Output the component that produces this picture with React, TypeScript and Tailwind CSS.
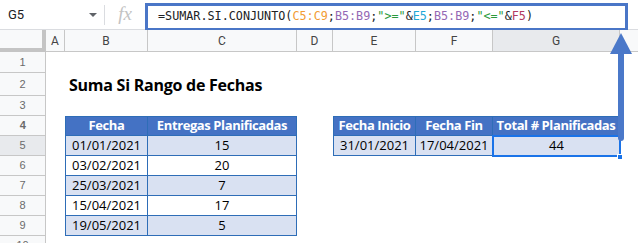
import React from "react";

const cellFont = { fontFamily: '"Open Sans", "Noto Sans", sans-serif' };

function RowHeader({ n, h, sel }: { n: string; h: number; sel?: boolean }) {
  return (
    <div
      className={`flex-none w-[46px] flex items-center justify-center border-r border-b border-[#c7c7c7] text-[11px] text-[#6b6b6b] ${sel ? "bg-[#e8eaed]" : "bg-[#f8f9fa]"}`}
      style={{ height: h, fontFamily: '"Liberation Sans", Arial, sans-serif' }}
    >
      {n}
    </div>
  );
}

const W = { A: 19, B: 83, C: 149, D: 36, E: 83, F: 77, G: 127 };

function Blank({ w }: { w: number }) {
  return <div className="flex-none h-full" style={{ width: w }} />;
}

export default function App() {
  const dataRows = [
    ["01/01/2021", "15", true],
    ["03/02/2021", "20", false],
    ["25/03/2021", "7", true],
    ["15/04/2021", "17", false],
    ["19/05/2021", "5", true],
  ] as const;
  const rowHeights = [20, 20, 20, 20, 20];

  return (
    <div className="relative w-[638px] h-[243px] overflow-hidden bg-white">
      {/* formula bar */}
      <div className="flex h-[30px] items-center border-b border-[#dadce0] bg-white">
        <div className="w-[104px] flex items-center pl-[8px] pr-[7px] h-full">
          <span className="text-[13px] text-[#202124]" style={{ fontFamily: 'Roboto, "Liberation Sans", sans-serif' }}>G5</span>
          <span className="ml-auto w-0 h-0 border-l-[4px] border-r-[4px] border-t-[4px] border-l-transparent border-r-transparent border-t-[#5f6368]" />
        </div>
        <div className="w-px h-[20px] bg-[#dadce0]" />
        <div className="w-[40px] flex items-center justify-center text-[19px] italic text-[#c3c3c3]" style={{ fontFamily: '"Liberation Serif", serif' }}>
          fx
        </div>
        <div
          className="flex-none w-[483px] h-[28px] mt-[5px] border-[3px] border-[#4a76c7] flex items-center pl-[10px] text-[11.75px] text-[#202124]"
          style={{ fontFamily: '"DejaVu Sans Mono", "Liberation Mono", monospace' }}
        >
          <span>=SUMAR.SI.CONJUNTO(</span>
          <span className="text-[#f29c33]">C5:C9</span>
          <span>;</span>
          <span className="text-[#9468b4]">B5:B9</span>
          <span>;</span>
          <span className="text-[#2a9a3c]">"&gt;="</span>
          <span>&amp;</span>
          <span className="text-[#1fa7d6]">E5</span>
          <span>;</span>
          <span className="text-[#9468b4]">B5:B9</span>
          <span>;</span>
          <span className="text-[#2a9a3c]">"&lt;="</span>
          <span>&amp;</span>
          <span className="text-[#b33a62]">F5</span>
          <span>)</span>
        </div>
      </div>

      {/* column header */}
      <div className="flex h-[22px] text-[12px] text-[#444]" style={{ fontFamily: 'Roboto, "Liberation Sans", sans-serif' }}>
        <div className="flex-none w-[46px] h-full bg-[#f8f9fa] border-r-[4px] border-b-[4px] border-[#c4c4c4]" />
        {[
          ["A", W.A],
          ["B", W.B],
          ["C", W.C],
          ["D", W.D],
          ["E", W.E],
          ["F", W.F],
        ].map(([l, w]) => (
          <div key={l as string} className="flex-none h-full flex items-center justify-center bg-[#f8f9fa] border-r border-b border-[#c7c7c7]" style={{ width: w as number }}>
            {l}
          </div>
        ))}
        <div className="flex-none h-full flex items-center justify-center bg-[#e8eaed] border-r border-b border-[#c7c7c7]" style={{ width: W.G }}>
          G
        </div>
        <div className="flex-1 h-full bg-[#f8f9fa] border-b border-[#c7c7c7]" />
      </div>

      {/* row 1 */}
      <div className="flex h-[21px]">
        <RowHeader n="1" h={21} />
      </div>
      {/* row 2 */}
      <div className="flex h-[23px]">
        <RowHeader n="2" h={23} />
        <Blank w={W.A} />
        <div className="flex items-center pl-[4px] text-[16px] font-bold text-black whitespace-nowrap tracking-[-0.25px]" style={cellFont}>
          Suma Si Rango de Fechas
        </div>
      </div>
      {/* row 3 */}
      <div className="flex h-[20px]">
        <RowHeader n="3" h={20} />
      </div>
      {/* row 4 header */}
      <div className="flex h-[20px] text-[13px] font-bold text-white tracking-[-0.4px]" style={cellFont}>
        <RowHeader n="4" h={20} />
        <Blank w={W.A} />
        <div className="flex-none h-full flex items-center justify-center bg-[#4472c4] border border-[#2e6db7]" style={{ width: W.B }}>Fecha</div>
        <div className="flex-none h-full flex items-center justify-center bg-[#4472c4] border-y border-r border-[#2e6db7] whitespace-nowrap" style={{ width: W.C }}>Entregas Planificadas</div>
        <Blank w={W.D} />
        <div className="flex-none h-full flex items-center justify-center bg-[#4472c4] border border-[#2e6db7] whitespace-nowrap" style={{ width: W.E }}>Fecha Inicio</div>
        <div className="flex-none h-full flex items-center justify-center bg-[#4472c4] border-y border-r border-[#2e6db7] whitespace-nowrap" style={{ width: W.F }}>Fecha Fin</div>
        <div className="flex-none h-full flex items-center justify-center bg-[#4472c4] border-y border-r border-[#2e6db7] whitespace-nowrap" style={{ width: W.G }}>Total # Planificadas</div>
      </div>
      {/* rows 5-9 */}
      {dataRows.map(([d, v, shade], i) => (
        <div key={i} className="flex text-[13px] text-black" style={{ ...cellFont, height: rowHeights[i] }}>
          <RowHeader n={String(5 + i)} h={rowHeights[i]} sel={i === 0} />
          <Blank w={W.A} />
          <div className={`flex-none h-full flex items-center justify-center border-x border-b border-[#2e6db7] ${shade ? "bg-[#d9e1f2]" : "bg-white"}`} style={{ width: W.B }}>{d}</div>
          <div className={`flex-none h-full flex items-center justify-center border-r border-b border-[#2e6db7] ${shade ? "bg-[#d9e1f2]" : "bg-white"}`} style={{ width: W.C }}>{v}</div>
          {i === 0 && (
            <>
              <Blank w={W.D} />
              <div className="flex-none h-full flex items-center justify-center border-x border-b border-[#2e6db7] bg-[#d9e1f2]" style={{ width: W.E }}>31/01/2021</div>
              <div className="flex-none h-full flex items-center justify-center border-r border-b border-[#2e6db7] bg-[#d9e1f2]" style={{ width: W.F }}>17/04/2021</div>
              <div className="relative flex-none h-full flex items-center justify-center bg-[#d9e1f2]" style={{ width: W.G }}>
                44
                <div className="absolute inset-[-1px] border-2 border-[#1a73e8]" />
                <div className="absolute right-[-3px] bottom-[-4px] w-[6px] h-[6px] bg-[#1a73e8] border border-white" />
              </div>
            </>
          )}
        </div>
      ))}
      {/* row 10 */}
      <div className="flex h-[20px]">
        <RowHeader n="10" h={20} />
      </div>

      {/* arrow */}
      <svg className="absolute left-[608px] top-[32px]" width="28" height="112" viewBox="0 0 28 112">
        <path d="M10 20 L16 20 L16 106 Q16 109 13 109 Q10 109 10 106 Z" fill="#4a78c9" />
        <path d="M13 1 L24 22 L2 22 Z" fill="#4a78c9" />
      </svg>
    </div>
  );
}
